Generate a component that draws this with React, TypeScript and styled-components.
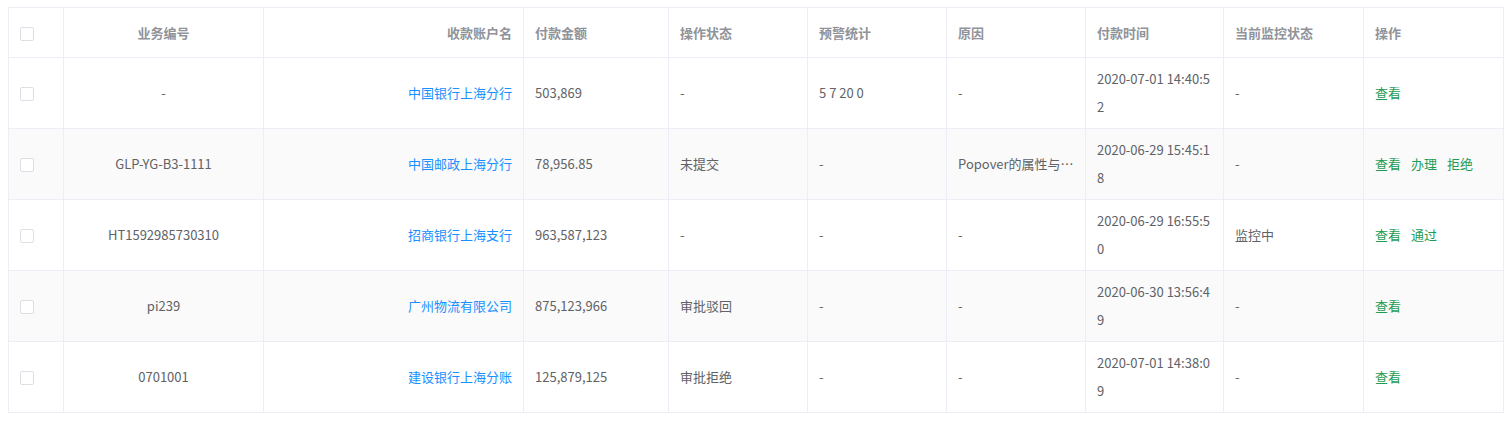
import React from 'react';
import styled, { createGlobalStyle } from 'styled-components';

const Global = createGlobalStyle`
  body { margin: 0; background: #fff; font-family: "Noto Sans CJK SC", "Noto Sans", sans-serif; }
`;

type Row = {
  no: string;
  account: string;
  amount: string;
  op: string;
  warn: string;
  reason: string;
  time: string;
  monitor: string;
  actions: string[];
};

const rows: Row[] = [
  { no: '-', account: '中国银行上海分行', amount: '503,869', op: '-', warn: '5 7 20 0', reason: '-', time: '2020-07-01 14:40:52', monitor: '-', actions: ['查看'] },
  { no: 'GLP-YG-B3-1111', account: '中国邮政上海分行', amount: '78,956.85', op: '未提交', warn: '-', reason: 'Popover的属性与…', time: '2020-06-29 15:45:18', monitor: '-', actions: ['查看', '办理', '拒绝'] },
  { no: 'HT1592985730310', account: '招商银行上海支行', amount: '963,587,123', op: '-', warn: '-', reason: '-', time: '2020-06-29 16:55:50', monitor: '监控中', actions: ['查看', '通过'] },
  { no: 'pi239', account: '广州物流有限公司', amount: '875,123,966', op: '审批驳回', warn: '-', reason: '-', time: '2020-06-30 13:56:49', monitor: '-', actions: ['查看'] },
  { no: '0701001', account: '建设银行上海分账', amount: '125,879,125', op: '审批拒绝', warn: '-', reason: '-', time: '2020-07-01 14:38:09', monitor: '-', actions: ['查看'] },
];

const widths = [55, 200, 260, 145, 139, 139, 139, 138, 140, 140];

const S = {
  Wrap: styled.div`
    padding: 7px 8px;
  `,
  Table: styled.table`
    width: 1495px;
    border-collapse: collapse;
    table-layout: fixed;
    font-size: 13px;
    color: #606266;
    border: 1px solid #ebeef5;
  `,
  Th: styled.th<{ $align?: string }>`
    height: 49px;
    padding: 0 11px;
    text-align: ${(p) => p.$align || 'left'};
    font-weight: bold;
    color: #909399;
    border: 1px solid #ebeef5;
  `,
  Tr: styled.tr<{ $striped: boolean }>`
    background: ${(p) => (p.$striped ? '#fafafa' : '#fff')};
  `,
  Td: styled.td<{ $align?: string }>`
    height: 70px;
    padding: 0 11px;
    text-align: ${(p) => p.$align || 'left'};
    line-height: 28px;
    border: 1px solid #ebeef5;
    overflow: hidden;
    white-space: nowrap;
    text-overflow: ellipsis;
  `,
  Wrapping: styled.span`
    display: block;
    white-space: normal;
    word-break: break-all;
    width: 118px;
  `,
  Check: styled.span`
    display: inline-block;
    width: 12px;
    height: 12px;
    border: 1px solid #dcdfe6;
    border-radius: 2px;
    background: #fff;
    vertical-align: middle;
  `,
  Link: styled.span`
    color: #1890ff;
  `,
  Action: styled.span`
    color: #1f9c53;
    margin-right: 10px;
  `,
};

export default function App() {
  return (
    <S.Wrap>
      <Global />
      <S.Table>
        <colgroup>
          {widths.map((w, i) => (
            <col key={i} style={{ width: w }} />
          ))}
        </colgroup>
        <thead>
          <tr>
            <S.Th><S.Check /></S.Th>
            <S.Th $align="center">业务编号</S.Th>
            <S.Th $align="right">收款账户名</S.Th>
            <S.Th>付款金额</S.Th>
            <S.Th>操作状态</S.Th>
            <S.Th>预警统计</S.Th>
            <S.Th>原因</S.Th>
            <S.Th>付款时间</S.Th>
            <S.Th>当前监控状态</S.Th>
            <S.Th>操作</S.Th>
          </tr>
        </thead>
        <tbody>
          {rows.map((r, i) => (
            <S.Tr key={i} $striped={i % 2 === 1}>
              <S.Td><S.Check /></S.Td>
              <S.Td $align="center">{r.no}</S.Td>
              <S.Td $align="right"><S.Link>{r.account}</S.Link></S.Td>
              <S.Td>{r.amount}</S.Td>
              <S.Td>{r.op}</S.Td>
              <S.Td>{r.warn}</S.Td>
              <S.Td>{r.reason}</S.Td>
              <S.Td><S.Wrapping>{r.time}</S.Wrapping></S.Td>
              <S.Td>{r.monitor}</S.Td>
              <S.Td>
                {r.actions.map((a) => (
                  <S.Action key={a}>{a}</S.Action>
                ))}
              </S.Td>
            </S.Tr>
          ))}
        </tbody>
      </S.Table>
    </S.Wrap>
  );
}
